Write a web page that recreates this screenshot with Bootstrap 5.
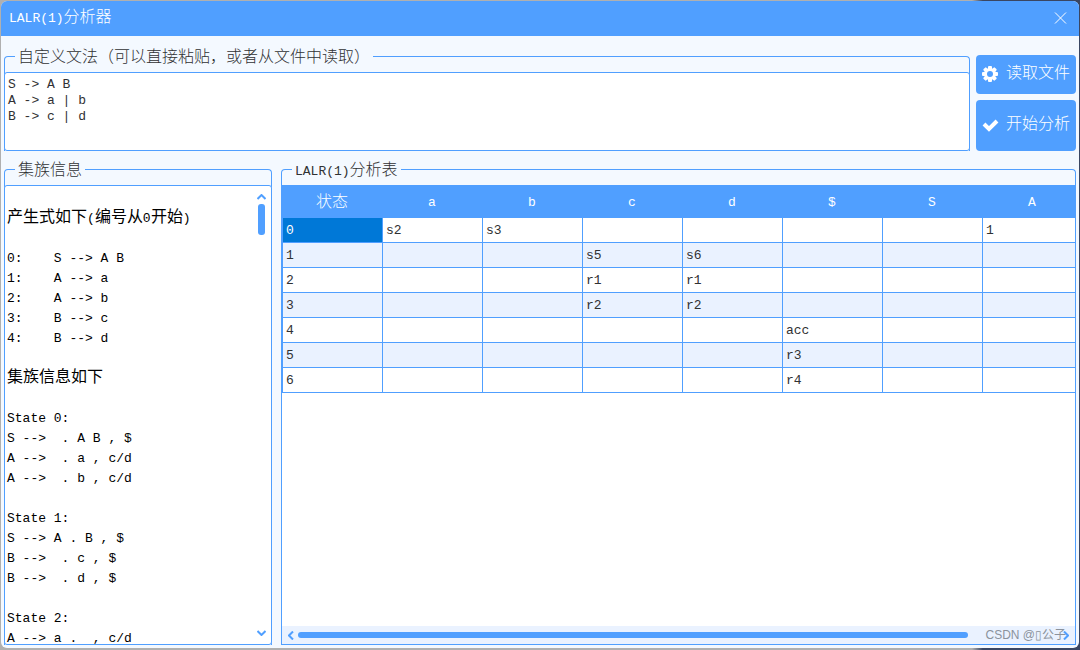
<!DOCTYPE html>
<html lang="zh-CN">
<head>
<meta charset="utf-8">
<meta name="viewport" content="width=device-width, initial-scale=1">
<title>LALR(1)分析器</title>
<link href="https://cdn.jsdelivr.net/npm/bootstrap@5.3.0/dist/css/bootstrap.min.css" rel="stylesheet">
<style>
  :root { --accent: #509fff; --pane: #f4f9ff; --stripe: #eaf2ff; --ink: #303133; }
  body {
    font-family: "Liberation Mono", "Noto Sans CJK SC", monospace;
    font-size: 13px; line-height: 20px; color: var(--ink);
    background: linear-gradient(90deg, #b0b0b0 90%, #3a4662 91%);
    padding: 1px 1px 2px;
  }
  .zh { font-size: 16px; font-weight: 300; line-height: 20px; }
  .app-window { background: var(--pane); border-radius: 6px; }
  .title-bar { background: var(--accent); height: 35px; padding: 0 12px 0 8px; }
  .title-bar h1 { font-size: 13px; line-height: 20px; }
  .title-bar button { line-height: 0; }
  .workspace { padding: 11px 3px 3px; gap: 9px; min-height: 0; }
  .group { border: 1px solid var(--accent); border-bottom: 0; border-radius: 4px 4px 0 0; padding-top: 5px; min-height: 0; }
  .group legend { line-height: 22px; height: 20px; margin: 0 0 0 10px; padding: 0 3px; }
  .group legend, .group legend .zh { line-height: 22px; }
  .legend-text { font-size: 13px; }
  .frame { border: 1px solid var(--accent); border-radius: 3px; background: #fff; margin: 0 -1px; min-height: 0; }
  .grammar { height: 79px; padding: 4px 3px; line-height: 16px; color: var(--ink); resize: none; outline: 0; }
  .top-row { gap: 6px; }
  .actions { flex: 0 0 100px; gap: 6px; padding-top: 8px; }
  .btn-act { background: var(--accent); color: #fff; border: 0; border-radius: 4px; padding: 0 5px; gap: 7px; min-height: 0; white-space: nowrap; }
  .btn-act:hover { background: #3d8ff0; color: #fff; }
  .btn-read { flex: 39 0 0; } .btn-run { flex: 51 0 0; }
  .bottom-row { gap: 9px; min-height: 0; }
  .side { flex: 0 0 25%; }
  .listing { padding: 3px 2px 0; font-size: 13px; line-height: 20px; color: #000; }
  .listing .zh { line-height: 16px; }
  .vbar { width: 20px; padding: 8px 0; }
  .vthumb { width: 7px; height: 31px; border-radius: 3px; background: var(--accent); }
  .parse-frame { border-radius: 0; }
  .parse-table { table-layout: fixed; width: 801px; border-collapse: separate; border-spacing: 0; border-left: 1px solid var(--accent); }
  .parse-table th { background: var(--accent); color: #fff; font-weight: 400; height: 32px; padding: 3px 2px 0 0; text-align: center; }
  .parse-table th.zh { font-weight: 300; }
  .parse-table td { height: 25px; padding: 3px 3px 1px; border-right: 1px solid var(--accent); border-bottom: 1px solid var(--accent); }
  .parse-table tbody tr:nth-child(even) { background: var(--stripe); }
  .parse-table td.picked { background: #0078d7; color: #fff; }
  .hbar { background: var(--stripe); height: 18px; padding: 0 6px; gap: 4px; }
  .hthumb { height: 6px; border-radius: 3px; background: var(--accent); }
  .watermark { right: 9px; bottom: 0; font: 12px/18px "Liberation Sans", "Noto Sans CJK SC", sans-serif; color: #8b929c; }
</style>
</head>
<body class="vh-100 d-flex flex-column overflow-hidden">
<main class="app-window flex-grow-1 d-flex flex-column overflow-hidden">
  <header class="title-bar d-flex align-items-center justify-content-between text-white">
    <h1 class="m-0 fw-normal">LALR(1)<span class="zh">分析器</span></h1>
    <button type="button" class="btn p-0 border-0 text-white" aria-label="关闭">
      <svg width="13" height="12" viewBox="0 0 13 12" fill="none" stroke="currentColor"><path d="M1 .5 12 11.500M12 .5 1 11.500"/></svg>
    </button>
  </header>
  <div class="workspace flex-grow-1 d-flex flex-column">
    <div class="top-row d-flex">
      <fieldset class="group flex-grow-1">
        <legend class="legend-text float-none w-auto"><label class="zh" for="grammar">自定义文法（可以直接粘贴，或者从文件中读取）</label></legend>
        <div class="d-flex">
          <textarea id="grammar" class="frame grammar flex-grow-1" spellcheck="false">S -&gt; A B
A -&gt; a | b
B -&gt; c | d</textarea>
        </div>
      </fieldset>
      <div class="actions d-flex flex-column">
        <button type="button" class="btn btn-act btn-read d-flex align-items-center">
          <svg class="flex-shrink-0" width="18" height="18" viewBox="0 0 18 18"><g fill="currentColor"><g id="teeth"><rect x="7" y="1" width="4" height="16" rx="1"/><rect x="1" y="7" width="16" height="4" rx="1"/></g><use href="#teeth" transform="rotate(45 9 9)"/><circle cx="9" cy="9" r="6"/></g><circle cx="9" cy="9" r="3" fill="#509fff"/></svg>
          <span class="zh">读取文件</span>
        </button>
        <button type="button" class="btn btn-act btn-run d-flex align-items-center">
          <svg class="flex-shrink-0" width="18" height="16" viewBox="0 0 18 16" fill="none" stroke="currentColor" stroke-width="4"><path d="m3 7 5 5 8-8"/></svg>
          <span class="zh">开始分析</span>
        </button>
      </div>
    </div>
    <div class="bottom-row flex-grow-1 d-flex">
      <fieldset class="group side d-flex flex-column">
        <legend class="legend-text float-none w-auto"><span class="zh">集族信息</span></legend>
        <div class="frame flex-grow-1 d-flex overflow-hidden">
          <pre class="listing flex-grow-1 m-0 overflow-hidden">

<span class="zh">产生式如下</span>(<span class="zh">编号从</span>0<span class="zh">开始</span>)<span class="d-block">
0:    S --&gt; A B
1:    A --&gt; a
2:    A --&gt; b
3:    B --&gt; c
4:    B --&gt; d

</span><span class="zh">集族信息如下</span><span class="d-block">
State 0:
S --&gt;  . A B , $
A --&gt;  . a , c/d
A --&gt;  . b , c/d

State 1:
S --&gt; A . B , $
B --&gt;  . c , $
B --&gt;  . d , $

State 2:
A --&gt; a .  , c/d</span></pre>
          <div class="vbar d-flex flex-column align-items-center">
            <svg width="9" height="6" viewBox="0 0 9 6" fill="none" stroke="#509fff" stroke-width="2"><path d="m0.500 5 4-4 4 4"/></svg>
            <div class="vthumb mt-1"></div>
            <svg class="mt-auto" width="9" height="6" viewBox="0 0 9 6" fill="none" stroke="#509fff" stroke-width="2"><path d="m0.500 1 4 4 4-4"/></svg>
          </div>
        </div>
      </fieldset>
      <fieldset class="group flex-grow-1 d-flex flex-column w-50">
        <legend class="legend-text float-none w-auto">LALR(1)<span class="zh">分析表</span></legend>
        <div class="frame parse-frame flex-grow-1 d-flex flex-column overflow-hidden position-relative">
          <div class="flex-grow-1 overflow-hidden">
            <table class="parse-table">
              <thead><tr><th class="zh" scope="col">状态</th><th scope="col">a</th><th scope="col">b</th><th scope="col">c</th><th scope="col">d</th><th scope="col">$</th><th scope="col">S</th><th scope="col">A</th></tr></thead>
              <tbody>
                <tr><td class="picked">0</td><td>s2</td><td>s3</td><td></td><td></td><td></td><td></td><td>1</td></tr>
                <tr><td>1</td><td></td><td></td><td>s5</td><td>s6</td><td></td><td></td><td></td></tr>
                <tr><td>2</td><td></td><td></td><td>r1</td><td>r1</td><td></td><td></td><td></td></tr>
                <tr><td>3</td><td></td><td></td><td>r2</td><td>r2</td><td></td><td></td><td></td></tr>
                <tr><td>4</td><td></td><td></td><td></td><td></td><td>acc</td><td></td><td></td></tr>
                <tr><td>5</td><td></td><td></td><td></td><td></td><td>r3</td><td></td><td></td></tr>
                <tr><td>6</td><td></td><td></td><td></td><td></td><td>r4</td><td></td><td></td></tr>
              </tbody>
            </table>
          </div>
          <div class="hbar d-flex align-items-center">
            <svg width="6" height="9" viewBox="0 0 6 9" fill="none" stroke="#509fff" stroke-width="2"><path d="m5 .5-4 4 4 4"/></svg>
            <div class="flex-grow-1"><div class="hthumb" style="width:88%"></div></div>
            <svg width="6" height="9" viewBox="0 0 6 9" fill="none" stroke="#509fff" stroke-width="2"><path d="m1 .5 4 4-4 4"/></svg>
          </div>
          <span class="watermark position-absolute">CSDN @▯公子</span>
        </div>
      </fieldset>
    </div>
  </div>
</main>
<script src="https://cdn.jsdelivr.net/npm/bootstrap@5.3.0/dist/js/bootstrap.bundle.min.js"></script>
</body>
</html>
